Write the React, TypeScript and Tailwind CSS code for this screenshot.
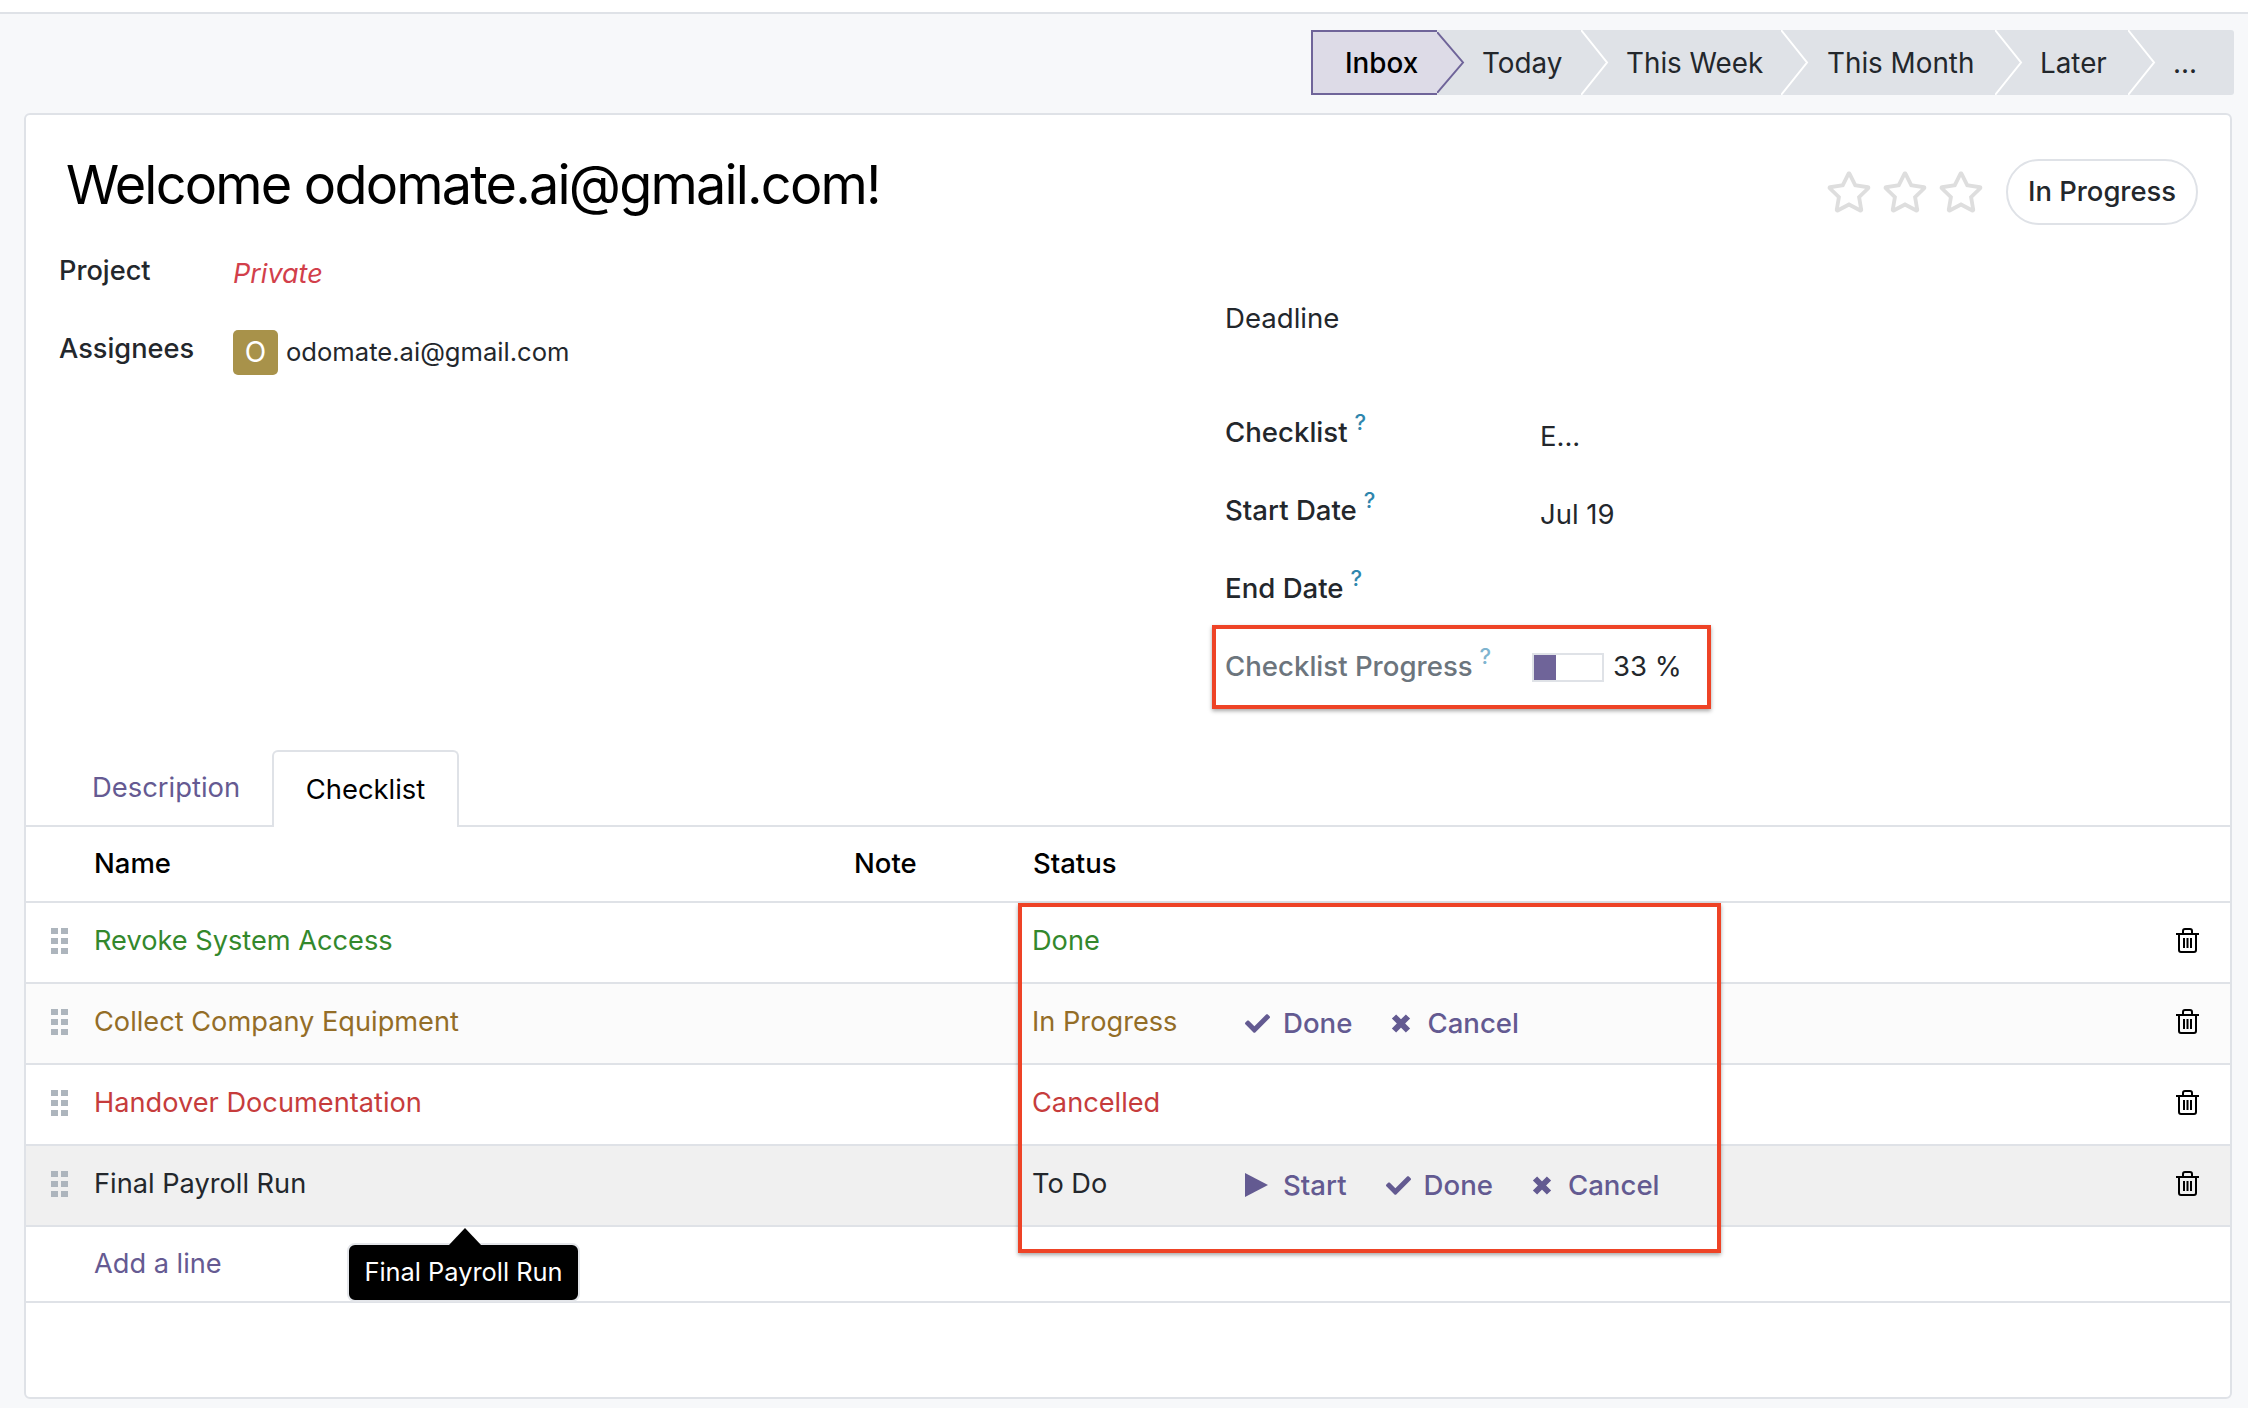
import { FaCheck, FaRegStar } from 'react-icons/fa';

const steps = [
  { label: 'Inbox', width: 'w-[126px]', pad: 'pl-[32px]', active: true },
  { label: 'Today', width: 'w-[144px]', pad: 'pl-[45px]', active: false },
  { label: 'This Week', width: 'w-[200px]', pad: 'pl-[45px]', active: false },
  { label: 'This Month', width: 'w-[214px]', pad: 'pl-[46px]', active: false },
  { label: 'Later', width: 'w-[133px]', pad: 'pl-[45px]', active: false },
  { label: '...', width: 'flex-1', pad: 'pl-[45px]', active: false, last: true },
];

function Chevron({ active }: { active: boolean }) {
  return (
    <svg className="absolute left-full top-0 h-full w-[28px]" viewBox="0 0 28 65" preserveAspectRatio="none">
      <path
        d="M0 0 L26 32.5 L0 65"
        fill={active ? '#dddbe7' : '#dfe2e7'}
        stroke={active ? '#6f6499' : '#ffffff'}
        strokeWidth="2"
      />
    </svg>
  );
}

function StatusBar() {
  return (
    <div className="ml-[1311px] mr-[14px] mt-[16px] flex h-[65px] rounded-r-[3px] bg-[#dfe2e7] text-[27.8px] text-[#23272c]">
      {steps.map((step, i) => (
        <div
          key={step.label}
          style={{ zIndex: steps.length - i }}
          className={`relative flex items-center pt-[2px] ${step.width} ${step.pad} ${
            step.active ? 'border-y-2 border-l-2 border-[#6f6499] bg-[#dddbe7] font-medium text-black' : ''
          }`}
        >
          <span>{step.label}</span>
          {!step.last && <Chevron active={step.active} />}
        </div>
      ))}
    </div>
  );
}

function Help({ muted }: { muted?: boolean }) {
  return (
    <sup className={`relative -top-[12px] ml-[7px] text-[22px] font-medium ${muted ? 'text-[#7fb4cf]' : 'text-[#2f86ad]'}`}>
      ?
    </sup>
  );
}

function Field({ label, help, value, plain }: { label: string; help?: boolean; value?: string; plain?: boolean }) {
  return (
    <div className="flex h-[78px] items-center">
      <div className={`w-[315px] text-[27.6px] text-[#23272c] ${plain ? 'font-normal' : 'font-medium'}`}>
        {label}
        {help && <Help />}
      </div>
      {value && <div className="mt-[8px] text-[27.5px] text-[#23272c]">{value}</div>}
    </div>
  );
}

function DragHandle() {
  return (
    <div className="grid grid-cols-[7px_7px] gap-x-[3px] gap-y-[4px]">
      {[0, 1, 2, 3, 4, 5].map((i) => (
        <span key={i} className="h-[6px] w-[7px] bg-[#adb5bd]" />
      ))}
    </div>
  );
}

function TrashIcon() {
  return (
    <svg width="23" height="25" viewBox="0 0 23 25" fill="none" stroke="black" strokeWidth="2">
      <path d="M0 6 H23" />
      <path d="M7 6 V3 Q7 1 9 1 H14 Q16 1 16 3 V6" />
      <path d="M3 6 V22 Q3 24 5 24 H18 Q20 24 20 22 V6" />
      <path d="M8 10 V20 M11.5 10 V20 M15 10 V20" />
    </svg>
  );
}

function PlayIcon() {
  return (
    <svg width="23" height="24" viewBox="0 0 23 24" fill="currentColor">
      <path d="M0 0 L23 12 L0 24 Z" />
    </svg>
  );
}

function CrossIcon() {
  return (
    <svg width="20" height="19" viewBox="0 0 20 19" fill="none" stroke="currentColor" strokeWidth="6">
      <path d="M3 2.5 L17 16.5 M17 2.5 L3 16.5" />
    </svg>
  );
}

function ActionButton({ kind, label }: { kind: 'start' | 'done' | 'cancel'; label: string }) {
  return (
    <div className="flex items-center text-[27.6px] font-medium text-[#635a91]">
      <span className={`flex items-center ${kind === 'cancel' ? 'w-[36px]' : 'w-[38px]'}`}>
        {kind === 'start' && <PlayIcon />}
        {kind === 'done' && <FaCheck size={25} />}
        {kind === 'cancel' && <CrossIcon />}
      </span>
      {label}
    </div>
  );
}

const rows = [
  { name: 'Revoke System Access', status: 'Done', color: 'text-[#33882c]', bg: '', actions: [] as string[] },
  { name: 'Collect Company Equipment', status: 'In Progress', color: 'text-[#936d27]', bg: 'bg-[#fbfbfb]', actions: ['done', 'cancel'] },
  { name: 'Handover Documentation', status: 'Cancelled', color: 'text-[#c63c3c]', bg: '', actions: [] },
  { name: 'Final Payroll Run', status: 'To Do', color: 'text-[#23272c]', bg: 'bg-[#f0f0f0]', actions: ['start', 'done', 'cancel'] },
];

function ChecklistRow({ row }: { row: (typeof rows)[number] }) {
  const labels: Record<string, string> = { start: 'Start', done: 'Done', cancel: 'Cancel' };
  return (
    <div className={`flex h-[81px] items-center border-b-2 border-[#dfe2e7] pb-[3px] text-[27.2px] ${row.color} ${row.bg}`}>
      <div className="w-[68px] pl-[25px]">
        <DragHandle />
      </div>
      <div className="w-[938px]">{row.name}</div>
      <div className="w-[213px]">{row.status}</div>
      <div className="mt-[3px] flex flex-1 gap-[39px]">
        {row.actions.map((a) => (
          <ActionButton key={a} kind={a as 'start' | 'done' | 'cancel'} label={labels[a]} />
        ))}
      </div>
      <div className="-mt-[2px] mr-[31px]">
        <TrashIcon />
      </div>
    </div>
  );
}

export default function App() {
  return (
    <div className="h-[1408px] w-[2248px] overflow-hidden bg-white font-['Inter',sans-serif]">
      <div className="mt-[12px] h-[1396px] border-t-2 border-[#dfe2e7] bg-[#f7f8fa]">
        <StatusBar />

        <div className="relative mb-[9px] ml-[24px] mr-[16px] mt-[18px] h-[1286px] rounded-[6px] border-2 border-[#dfe2e7] bg-white">
          <div className="flex h-[111px] items-end justify-between pb-[1px] pl-[40px] pr-[32px]">
            <h1 className="text-[54px] leading-[80px] tracking-[-1.8px] text-black">Welcome odomate.ai@gmail.com!</h1>
            <div className="flex items-center">
              <div className="flex gap-[10px] text-[#dedede]">
                <FaRegStar size={46} />
                <FaRegStar size={46} />
                <FaRegStar size={46} />
              </div>
              <div className="ml-[22px] flex h-[66px] w-[192px] items-center justify-center rounded-[33px] border-2 border-[#dfe2e7] text-[27.4px] font-medium text-[#23272c]">
                In Progress
              </div>
            </div>
          </div>

          <div className="flex pl-[33px]">
            <div className="w-[1166px] pt-[6px]">
              <div className="flex h-[78px] items-center text-[27.2px] text-[#23272c]">
                <div className="w-[174px] font-medium">Project</div>
                <div className="mt-[6px] text-[27px] italic text-[#d23f4b]">Private</div>
              </div>
              <div className="flex h-[78px] items-center text-[27.2px] text-[#23272c]">
                <div className="w-[174px] font-medium">Assignees</div>
                <div className="mt-[6px] flex items-center">
                  <div className="flex h-[45px] w-[45px] items-center justify-center rounded-[5px] bg-[#a8924a] text-[28px] text-white">O</div>
                  <span className="ml-[8px] text-[25.6px]">odomate.ai@gmail.com</span>
                </div>
              </div>
            </div>
            <div className="flex-1 pt-[54px]">
              <div className="mb-[36px]">
                <Field label="Deadline" plain />
              </div>
              <Field label="Checklist" help value="E..." />
              <Field label="Start Date" help value="Jul 19" />
              <Field label="End Date" help />
              <div className="flex h-[78px] items-center text-[27.6px]">
                <div className="w-[307px] font-medium text-[#6c757d]">
                  Checklist Progress
                  <Help muted />
                </div>
                <div className="h-[29px] w-[72px] border-2 border-[#dfe2e7] bg-white">
                  <div className="h-full w-[22px] bg-[#6f6499]" />
                </div>
                <span className="ml-[9px] text-[27.5px] text-[#23272c]">33 %</span>
              </div>
            </div>
          </div>

          <div className="mt-[44px] flex h-[77px] items-end border-b-2 border-[#dfe2e7] pl-[66px] text-[27.4px]">
            <div className="flex h-full w-[180px] items-center text-[#655a92]">Description</div>
            <div className="-mb-[2px] flex h-[77px] w-[187px] items-center justify-center rounded-t-[6px] border-2 border-b-0 border-[#dfe2e7] bg-white text-black">
              Checklist
            </div>
          </div>

          <div className="flex h-[76px] items-center border-b-2 border-[#dfe2e7] text-[27.5px] font-medium text-black">
            <div className="w-[68px]" />
            <div className="w-[760px]">Name</div>
            <div className="w-[179px]">Note</div>
            <div>Status</div>
          </div>

          {rows.map((row) => (
            <ChecklistRow key={row.name} row={row} />
          ))}

          <div className="flex h-[76px] items-center border-b-2 border-[#dfe2e7] pl-[68px] text-[27.2px] text-[#655a92]">
            Add a line
          </div>

          {/* tooltip for the hovered row */}
          <div className="absolute left-[321px] top-[1128px] flex h-[59px] w-[233px] items-center justify-center rounded-[8px] border-2 border-[#e4e6ea] bg-black text-[25.4px] text-white">
            <svg className="absolute -top-[17px] left-[100px]" width="32" height="17" viewBox="0 0 32 17">
              <path d="M0 17 L16 0 L32 17 Z" fill="black" />
            </svg>
            Final Payroll Run
          </div>

          {/* red annotation boxes */}
          <div className="absolute left-[1186px] top-[510px] h-[84px] w-[499px] border-4 border-[#ee4326] shadow-[0_2px_4px_rgba(0,0,0,0.35)]" />
          <div className="absolute left-[992px] top-[788px] h-[350px] w-[703px] border-4 border-[#ee4326] shadow-[0_2px_4px_rgba(0,0,0,0.35)]" />
        </div>
      </div>
    </div>
  );
}
